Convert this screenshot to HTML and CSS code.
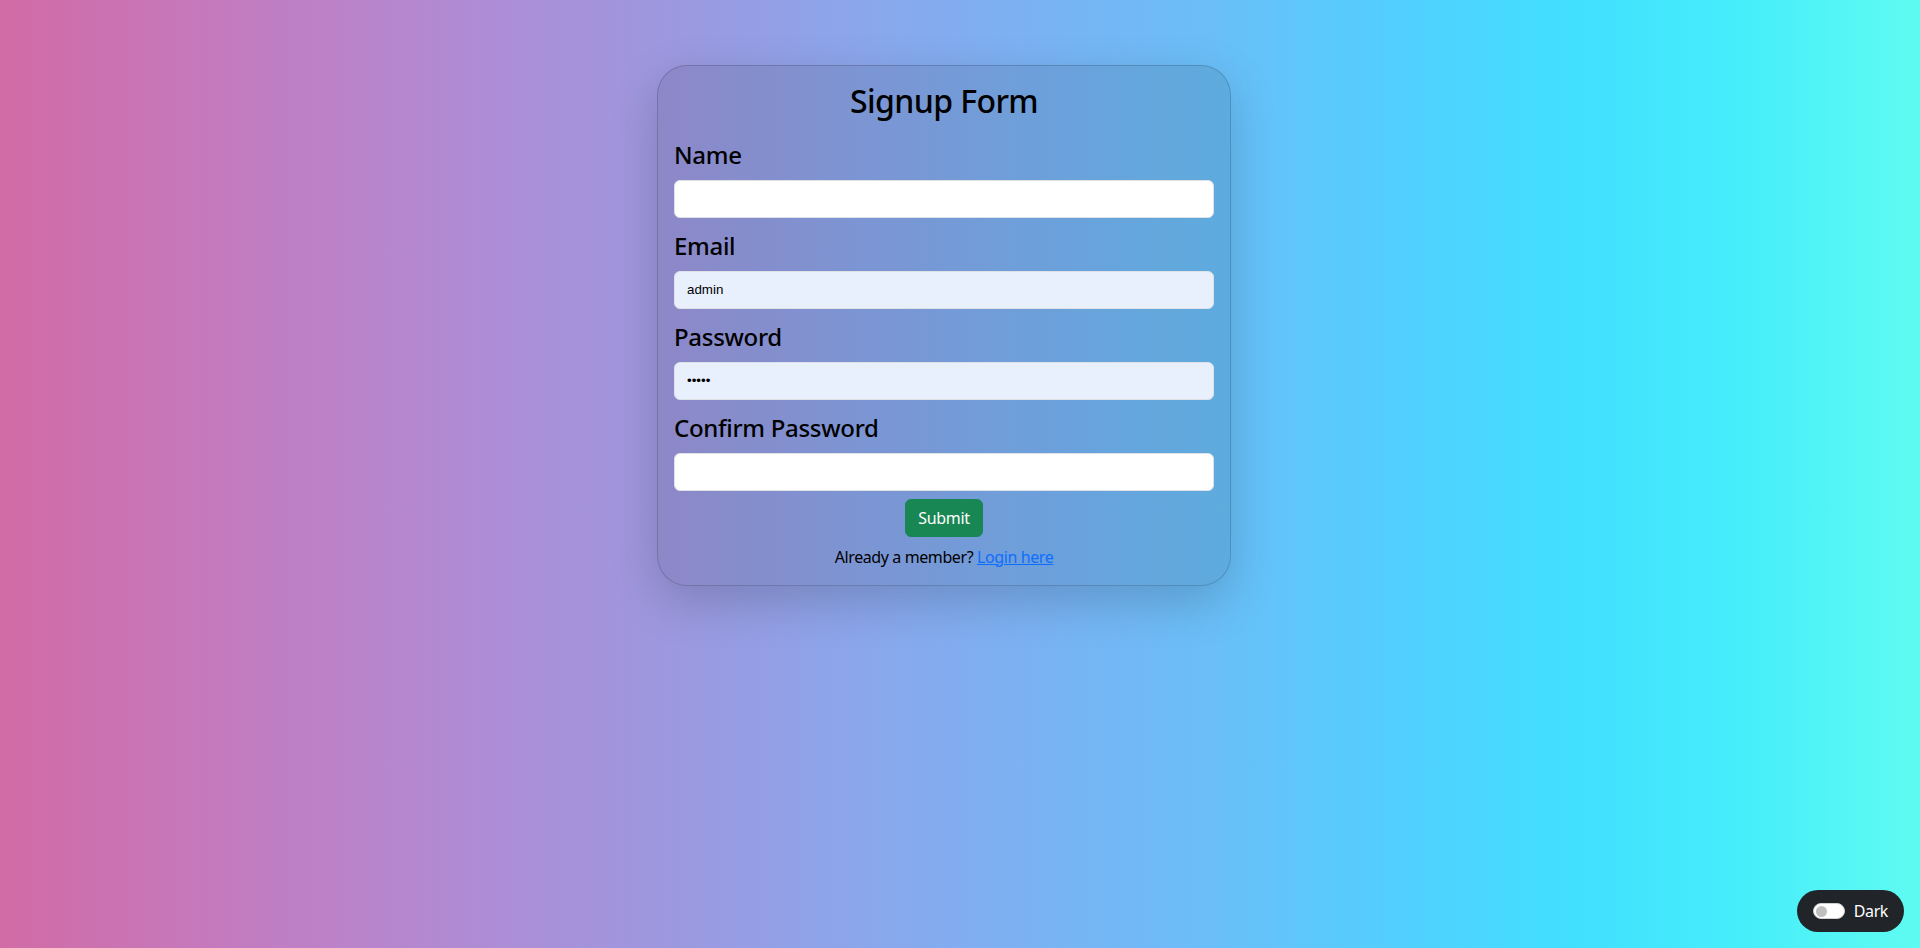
FILE: index.html
```html
<!DOCTYPE html>
<html lang="en">
<head>
<meta charset="utf-8">
<title>Signup Form</title>
<link rel="stylesheet" href="styles.css">
</head>
<body>
<main class="page">
  <section class="card">
    <h2 class="title">Signup Form</h2>
    <form class="form">
      <div class="group">
        <label class="label" for="name">Name</label>
        <input class="field" id="name" type="text">
      </div>
      <div class="group">
        <label class="label" for="email">Email</label>
        <input class="field field-filled" id="email" type="text" value="admin">
      </div>
      <div class="group">
        <label class="label" for="password">Password</label>
        <input class="field field-filled" id="password" type="password" value="admin">
      </div>
      <div class="group group-last">
        <label class="label" for="confirm">Confirm Password</label>
        <input class="field" id="confirm" type="password">
      </div>
      <div class="actions">
        <button class="btn" type="button">Submit</button>
      </div>
      <p class="note">Already a member? <a class="link" href="#">Login here</a></p>
    </form>
  </section>
</main>
<div class="theme-toggle">
  <span class="switch"><span class="knob"></span></span>
  <span class="toggle-text">Dark</span>
</div>
</body>
</html>
```
FILE: styles.css
```css
html, body {
  margin: 0;
  padding: 0;
}
body {
  min-height: 100vh;
  font-family: "Noto Sans", "DejaVu Sans", sans-serif;
  color: #212529;
  background: linear-gradient(to right, #d16ba5, #c777b9, #ba83ca, #aa8fd8, #9a9ae1, #8aa7ec, #79b3f4, #69bff8, #52cffe, #41dfff, #46eefa, #5ffbf1);
}
.page {
  display: flex;
  justify-content: center;
  padding: 65px 32px 0 0;
}
.card {
  width: 574px;
  box-sizing: border-box;
  padding: 16px;
  border: 1px solid rgba(0, 0, 0, 0.16);
  border-radius: 30px;
  background: rgba(0, 0, 0, 0.1);
  box-shadow: 0 16px 48px rgba(0, 0, 0, 0.175);
}
.title {
  margin: 0 0 21px;
  font-size: 32px;
  font-weight: 500;
  letter-spacing: -0.6px;
  line-height: 1.2;
  text-align: center;
  color: #000;
}
.form {
  display: flex;
  flex-direction: column;
}
.group {
  display: flex;
  flex-direction: column;
  margin-bottom: 14px;
}
.group-last {
  margin-bottom: 0;
}
.label {
  font-size: 24px;
  font-weight: 500;
  letter-spacing: -0.3px;
  line-height: 1.2;
  margin-bottom: 10px;
  color: #000;
}
.field {
  height: 38px;
  box-sizing: border-box;
  padding: 6px 12px;
  border: 1px solid #dee2e6;
  border-radius: 6px;
  background: #fff;
  font-family: "Liberation Sans", Arial, sans-serif;
  font-size: 13.33px;
  color: #000;
  outline: none;
}
.field-filled {
  background: #e8f0fe;
}
.actions {
  display: flex;
  justify-content: center;
  margin-top: 8px;
}
.btn {
  height: 38px;
  padding: 6px 12px;
  border: 1px solid #198754;
  border-radius: 6px;
  background: #198754;
  color: #fff;
  font-family: inherit;
  font-size: 16px;
  letter-spacing: -0.3px;
  line-height: 24px;
}
.note {
  margin: 8px 0 0;
  font-size: 16px;
  letter-spacing: -0.4px;
  line-height: 24px;
  text-align: center;
  color: #000;
}
.link {
  color: #0d6efd;
  text-decoration: underline;
}
.theme-toggle {
  position: fixed;
  right: 16px;
  bottom: 16px;
  height: 42px;
  box-sizing: border-box;
  padding: 0 16px 0 16px;
  display: flex;
  align-items: center;
  gap: 9px;
  border-radius: 21px;
  background: #212529;
  color: #fff;
  font-size: 16px;
  letter-spacing: -0.4px;
}
.switch {
  width: 32px;
  height: 16px;
  box-sizing: border-box;
  border-radius: 8px;
  background: #fff;
  border: 1px solid #d0d0d0;
  display: flex;
  align-items: center;
  padding-left: 2px;
}
.knob {
  width: 11px;
  height: 11px;
  border-radius: 50%;
  background: #bfbfbf;
}
.toggle-text {
  line-height: 24px;
}
```
